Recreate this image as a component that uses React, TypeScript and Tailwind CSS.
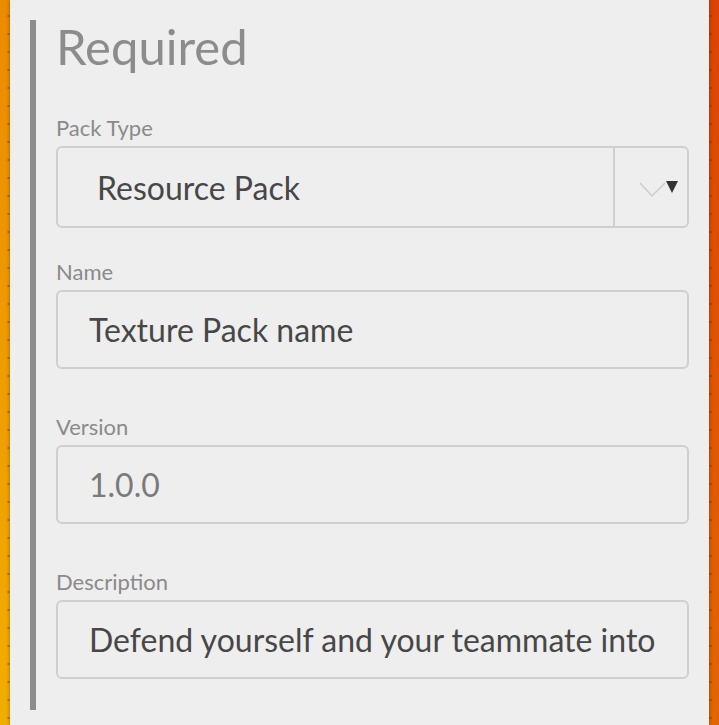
const font = { fontFamily: "Lato, 'Noto Sans', sans-serif" };

function Field({
  label,
  value,
  muted,
  className,
}: {
  label: string;
  value: string;
  muted?: boolean;
  className?: string;
}) {
  return (
    <div className={className}>
      <div className="text-[22px] leading-[24px] text-[#8a8a8a] mb-[6px]">{label}</div>
      <div className="h-[79px] border-2 border-[#cfcfcf] rounded-[6px] flex items-center pl-[31px] pr-[31px] overflow-hidden whitespace-nowrap">
        <span className={muted ? "text-[32px] text-[#7a7a7a]" : "text-[32px] text-[#474747]"}>{value}</span>
      </div>
    </div>
  );
}

export default function App() {
  return (
    <div
      className="w-[719px] h-[725px] overflow-hidden bg-[linear-gradient(245deg,#de4200,#f2ae00)]"
      style={font}
    >
      <div className="h-full px-[10px] bg-[radial-gradient(circle,rgba(90,30,0,0.4)_1px,transparent_1.6px)] bg-[size:18px_18px] bg-[position:-0.5px_7px]">
        <div className="h-full bg-[#eeeeee] pt-[20px] px-[20px] shadow-[0_0_4px_rgba(0,0,0,0.35)]">
          <div className="h-[690px] border-l-[6px] border-[#8c8c8c] pl-[20px] pt-[2px]">
            <h1 className="text-[49px] leading-[48px] text-[#8c8c8c]">Required</h1>

            <div className="mt-[46px]">
              <div className="text-[22px] leading-[24px] text-[#8a8a8a] mb-[6px]">Pack Type</div>
              <div className="h-[82px] border-2 border-[#cfcfcf] rounded-[6px] flex">
                <div className="flex-1 flex items-center pl-[39px] pt-[2px] text-[32px] text-[#474747]">Resource Pack</div>
                <div className="w-[74px] border-l-2 border-[#cfcfcf] relative">
                  <svg className="absolute left-[24px] top-[34px]" width="28" height="16" viewBox="0 0 28 16">
                    <path d="M1 1 L13 14 L26 1" fill="none" stroke="#cccccc" strokeWidth="1.5" />
                  </svg>
                  <svg className="absolute left-[51px] top-[33px]" width="12" height="12" viewBox="0 0 12 12">
                    <path d="M0 0 H12 L6 12 Z" fill="#333333" />
                  </svg>
                </div>
              </div>
            </div>

            <Field className="mt-[32px]" label="Name" value="Texture Pack name" />
            <Field className="mt-[46px]" label="Version" value="1.0.0" muted />
            <Field className="mt-[46px]" label="Description" value="Defend yourself and your teammate into" />
          </div>
        </div>
      </div>
    </div>
  );
}
